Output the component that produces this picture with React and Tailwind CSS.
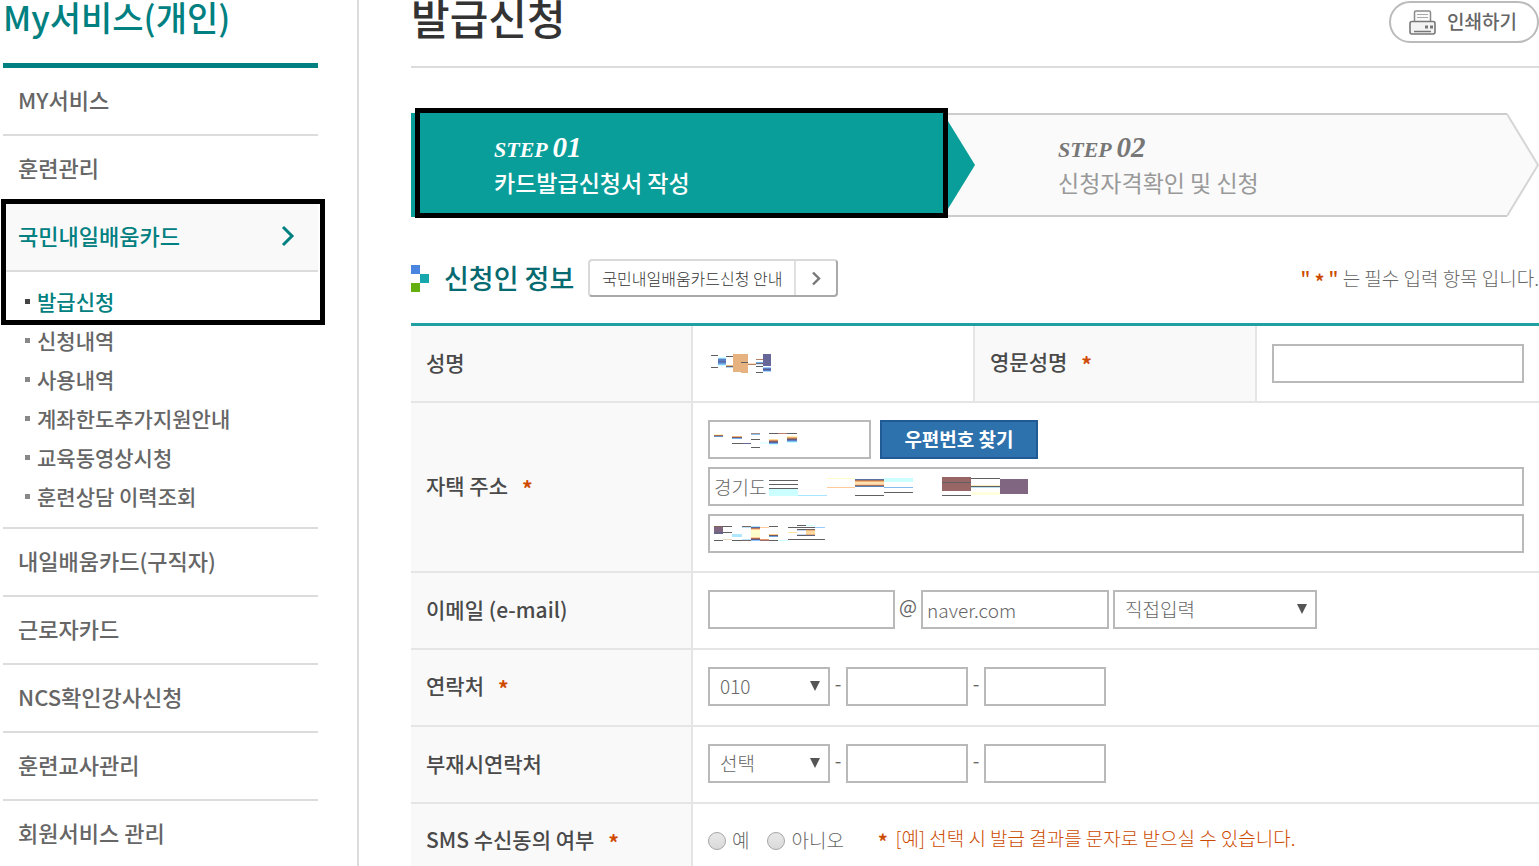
import { useState } from 'react'
import clsx from 'clsx'

const SUB_MENU = [
  '발급신청',
  '신청내역',
  '사용내역',
  '계좌한도추가지원안내',
  '교육동영상시청',
  '훈련상담 이력조회',
]

const MENU = [
  { label: 'MY서비스' },
  { label: '훈련관리' },
  { label: '국민내일배움카드', children: SUB_MENU },
  { label: '내일배움카드(구직자)' },
  { label: '근로자카드' },
  { label: 'NCS확인강사신청' },
  { label: '훈련교사관리' },
  { label: '회원서비스 관리' },
]

// Scrambled personal data: [x, y, width, height, colour]
const DARK = '#606063'

const NAME_MOSAIC = [
  [0, 1, 7, 1, DARK], [0, 13, 7, 1, DARK],
  [7, 3, 8, 1, '#ccffff'], [7, 4, 8, 1, '#8bc4f5'], [7, 5, 8, 2, '#5a80c4'], [7, 7, 8, 1, '#5a66a0'],
  [7, 8, 8, 1, '#5a80c4'], [7, 9, 8, 1, '#6699dd'], [7, 10, 8, 1, '#8bc4f5'], [7, 11, 8, 1, '#ccffff'],
  [15, 2, 7, 1, DARK], [15, 11, 7, 1, '#f0c080'], [15, 12, 7, 1, '#706060'], [15, 13, 7, 1, '#b0d8f8'],
  [22, 0, 15, 18, '#e6b380'], [30, 18, 7, 1, '#e6b380'], [30, 8, 7, 1, DARK],
  [37, 9, 8, 1, '#ffe0c0'], [37, 10, 8, 1, '#b88068'],
  [45, 5, 7, 1, '#b88068'], [45, 8, 7, 1, '#70b0e6'], [45, 9, 7, 1, '#706878'], [45, 10, 7, 1, '#d0e8f8'],
  [45, 12, 7, 1, DARK], [45, 18, 7, 1, DARK],
  [52, 0, 8, 12, '#666699'], [52, 13, 8, 1, '#99ccff'], [52, 14, 8, 1, '#5a80c4'],
  [52, 15, 8, 1, '#5a5a90'], [52, 16, 8, 1, '#5a80c4'], [52, 17, 8, 1, '#b0d8ff'],
]

const ZIP_MOSAIC = [
  [0, 1, 9, 1, '#fff0c0'], [0, 2, 9, 1, '#a87058'], [0, 3, 9, 1, '#6690cc'],
  [18, 3, 10, 1, '#f0b878'], [18, 4, 10, 1, '#805868'], [18, 5, 10, 1, '#70b0ee'],
  [18, 10, 10, 1, DARK], [28, 10, 9, 1, '#666699'],
  [37, 0, 9, 1, '#a08c88'], [37, 1, 9, 1, '#8bbdee'], [37, 6, 9, 1, DARK], [37, 14, 9, 1, DARK],
  [46, 9, 9, 2, '#e6ffff'],
  [55, 0, 9, 1, DARK], [55, 6, 9, 1, '#ffdd99'], [55, 7, 9, 1, '#d09060'], [55, 8, 9, 1, '#805868'],
  [55, 9, 9, 1, '#5a66a0'], [55, 10, 9, 1, '#70b0ee'], [55, 11, 9, 1, '#ccffff'],
  [64, 0, 9, 1, '#b88068'],
  [73, 0, 10, 1, DARK], [73, 3, 10, 1, '#ffeeb0'], [73, 4, 10, 1, '#f0b070'], [73, 5, 10, 1, '#b07858'],
  [73, 6, 10, 1, '#665c80'], [73, 7, 10, 1, '#5a80c4'], [73, 8, 10, 1, '#80c0f8'], [73, 9, 10, 1, '#ccffff'],
]

const ADDRESS_MOSAIC = [
  [0, 3, 29, 1, DARK], [0, 7, 29, 1, DARK], [0, 11, 29, 1, DARK], [0, 12, 29, 7, '#ccffff'],
  [29, 18, 29, 1, '#a8e6ff'],
  [58, 1, 28, 1, '#ffffcc'], [58, 10, 28, 1, '#ffcc99'],
  [86, 2, 29, 1, '#5a70a0'], [86, 3, 29, 1, '#b07858'], [86, 4, 29, 1, '#f0b070'], [86, 5, 29, 2, '#ffe0b0'],
  [86, 7, 29, 1, '#ffcc99'], [86, 8, 29, 1, '#a87058'], [86, 9, 29, 1, '#5a80b8'], [86, 18, 29, 1, DARK],
  [115, 1, 29, 4, '#ccffff'], [115, 10, 29, 1, '#80b8f0'], [115, 15, 29, 1, DARK],
  [173, 0, 29, 14, '#996666'], [173, 5, 29, 1, DARK], [173, 18, 29, 1, DARK],
  [202, 1, 29, 1, DARK], [202, 8, 29, 1, '#ffeebb'], [202, 9, 29, 1, DARK], [202, 10, 29, 1, '#b8e0f0'],
  [202, 15, 29, 3, '#ffffe0'],
  [231, 2, 28, 15, '#806680'],
]

const DETAIL_MOSAIC = [
  [0, 1, 9, 1, '#806055'], [0, 2, 9, 5, '#806680'], [0, 7, 9, 2, '#666688'], [0, 15, 9, 1, DARK],
  [9, 1, 9, 1, DARK], [9, 7, 9, 1, DARK], [9, 14, 9, 1, '#e8d8c0'],
  [18, 9, 10, 3, '#b0e6ff'], [18, 15, 10, 1, DARK],
  [28, 1, 9, 1, '#806860'], [28, 2, 9, 1, '#b8e6ff'], [28, 14, 9, 1, '#b8e6ff'], [28, 15, 9, 1, '#806860'],
  [37, 1, 9, 1, '#b0e6ff'], [37, 2, 9, 1, '#5a66a0'], [37, 3, 9, 1, '#c08058'], [37, 4, 9, 1, '#ffcc99'],
  [37, 5, 9, 7, '#ffffcc'], [37, 12, 9, 1, '#ffcc99'], [37, 13, 9, 1, '#b07050'], [37, 14, 9, 1, '#5a5a90'],
  [37, 15, 9, 1, '#90c8f8'],
  [46, 2, 9, 1, '#ffcc99'], [46, 14, 9, 1, '#e09868'], [46, 15, 9, 1, '#a07070'],
  [55, 1, 9, 1, DARK], [55, 9, 9, 1, '#ffcc88'], [55, 10, 9, 1, '#705868'], [55, 11, 9, 1, '#6aa0e0'],
  [55, 15, 9, 1, DARK],
  [64, 15, 10, 1, '#ccffff'],
  [74, 2, 9, 1, DARK], [74, 7, 9, 1, '#ffe6a0'], [74, 14, 37, 1, DARK],
  [83, 0, 9, 1, DARK], [83, 2, 9, 1, DARK], [83, 4, 9, 1, DARK], [83, 5, 9, 1, '#c8d8f0'],
  [83, 9, 9, 1, '#c8d8f0'], [83, 10, 9, 1, DARK],
  [92, 0, 9, 1, '#ccffff'], [92, 2, 9, 1, DARK], [92, 4, 9, 1, '#806860'], [92, 5, 9, 1, '#e6b380'],
  [92, 6, 9, 3, '#ffd8a0'], [92, 9, 9, 1, '#e6b380'], [92, 10, 9, 1, '#606080'],
  [101, 2, 10, 1, '#99ccff'],
]

const Mosaic = ({ cells, width, height, className }) => (
  <svg
    width={width}
    height={height}
    shapeRendering="crispEdges"
    aria-hidden="true"
    className={className}
  >
    {cells.map(([x, y, w, h, fill], i) => (
      <rect key={i} x={x} y={y} width={w} height={h} fill={fill} />
    ))}
  </svg>
)

const PrinterIcon = () => (
  <svg width="27" height="25" viewBox="0 0 27 25" fill="none" aria-hidden="true">
    <path d="M5.5 11V2.5Q5.5 1 7 1H20Q21.5 1 21.5 2.5V11" fill="#fafafa" stroke="#8a8a8a" strokeWidth="1.5" />
    <path d="M8 4.5H19M8 7.5H19" stroke="#aaa" />
    <rect x="1" y="11.5" width="25" height="12.5" rx="2" fill="#f3f3f3" stroke="#777" strokeWidth="1.6" />
    <path d="M5 21.5H22" stroke="#777" strokeWidth="1.5" />
    <path d="M16 15.5h3v3h-3zM21 15.5h3v3h-3z" fill="#777" />
  </svg>
)

const Chevron = ({ className, size = 'large' }) => (
  <svg
    width={size === 'large' ? 14 : 9}
    height={size === 'large' ? 22 : 15}
    viewBox={size === 'large' ? '0 0 14 22' : '0 0 9 15'}
    fill="none"
    stroke="currentColor"
    aria-hidden="true"
    className={className}
  >
    {size === 'large'
      ? <path d="M2 2L11 11L2 20" strokeWidth="3" />
      : <path d="M1 1.5L7 7.5L1 13.5" strokeWidth="2.4" />}
  </svg>
)

const Required = () => <span className="ml-[14px] align-[-3px] leading-none font-bold text-[#d04a05]">*</span>

const Field = ({ className, ...props }) => (
  <input
    type="text"
    className={clsx('h-[39px] border-2 border-[#b9b9b9] bg-white px-1 text-[19px] font-light text-[#666] outline-none', className)}
    {...props}
  />
)

const SelectBox = ({ className, options, ...props }) => (
  <span className={clsx('relative inline-flex', className)}>
    <select
      className="h-[39px] w-full appearance-none border-2 border-[#b9b9b9] bg-white px-[10px] text-[19px] font-light text-[#666] outline-none"
      {...props}
    >
      {options.map((option) => <option key={option}>{option}</option>)}
    </select>
    <svg width="10" height="10" viewBox="0 0 10 10" aria-hidden="true" className="pointer-events-none absolute top-[14px] right-[10px]">
      <path d="M0 0H10L5 10Z" fill="#555" />
    </svg>
  </span>
)

const Th = ({ children, htmlFor }) => (
  <th scope="row" className="border-r-2 border-b-2 border-[#e5e5e5] bg-[#f9f9f9] px-[15px] pb-[3px] text-left text-[21px] leading-6 font-medium text-[#4a4a4a]">
    <label htmlFor={htmlFor}>{children}</label>
  </th>
)

const Td = ({ children, className, ...props }) => (
  <td className={clsx('border-b-2 border-[#e5e5e5] px-[15px]', className)} {...props}>
    {children}
  </td>
)

// Cell that spans the rest of the row
const WideTd = ({ children }) => <Td colSpan={3} className="pb-[2px]">{children}</Td>

const Dash = () => <span className="w-4 pb-2 text-center text-[19px] leading-6">-</span>

const PhoneFields = ({ id, options }) => (
  <div className="flex items-center">
    <SelectBox id={id} options={options} className="w-[122px]" />
    <Dash />
    <Field className="w-[122px]" aria-label="가운데 번호" />
    <Dash />
    <Field className="w-[122px]" aria-label="끝 번호" />
  </div>
)

const Sidebar = () => (
  <aside className="w-[359px] shrink-0 border-r-2 border-[#dcdcdc] pl-[3px]">
    <h2 className="h-[63px] text-[34px] leading-[34px] font-medium text-[#008080]">My서비스(개인)</h2>
    <nav className="w-[315px] border-t-[5px] border-[#008080]">
      <ul>
        {MENU.map(({ label, children }) => (
          <li key={label} className="relative">
            <a
              href="#"
              className={clsx(
                'flex h-[68px] items-center justify-between border-b-2 border-[#dcdcdc] pr-[23px] pb-[3px] pl-[15px] text-[22px] font-medium',
                children ? 'bg-[#f9f9f9] text-[#008080]' : 'text-[#666]',
              )}
            >
              {label}
              {children && <Chevron />}
            </a>
            {children && (
              <>
                <ul className="border-b-2 border-[#dcdcdc] pt-[11px] pb-[10px]">
                  {children.map((child, i) => (
                    <li key={child}>
                      <a
                        href="#"
                        className={clsx(
                          'flex h-[39px] items-center gap-[7px] pb-[2px] pl-[22px] text-[21px] font-medium',
                          i === 0 ? 'text-[#008080]' : 'text-[#666]',
                        )}
                      >
                        <span className={clsx('size-[5px]', i === 0 ? 'bg-[#444]' : 'bg-[#888]')} />
                        {child}
                      </a>
                    </li>
                  ))}
                </ul>
                {/* Highlight frame around the current menu */}
                <span className="pointer-events-none absolute -top-[5px] -left-[2px] h-[126px] w-[324px] border-5 border-black" />
              </>
            )}
          </li>
        ))}
      </ul>
    </nav>
  </aside>
)

const Steps = () => (
  <ol className="mt-[45px] flex h-[104px]">
    <li className="relative flex w-1/2">
      <div className="flex-1 bg-[#099e99] pt-[17px] pl-[83px] text-white">
        <p className="font-['Liberation_Serif'] text-[22px] leading-[34px] font-bold italic">
          STEP <span className="text-[29px]">01</span>
        </p>
        <p className="text-[23px] leading-[30px] font-medium">카드발급신청서 작성</p>
      </div>
      <svg width="32" height="104" viewBox="0 0 32 104" aria-hidden="true">
        <path d="M0 0H32V104H0Z" fill="#fafafa" />
        <path d="M0 1H32M0 103H32" stroke="#ccc" strokeWidth="2" />
        <path d="M0 0L32 52L0 104Z" fill="#099e99" />
      </svg>
      <span className="pointer-events-none absolute -top-[5px] right-[27px] -bottom-px left-1 border-5 border-black" />
    </li>
    <li className="flex w-1/2">
      <div className="flex-1 border-y-2 border-[#ccc] bg-[#fafafa] pt-[15px] pl-[83px] text-[#777]">
        <p className="font-['Liberation_Serif'] text-[22px] leading-[34px] font-bold italic">
          STEP <span className="text-[29px]">02</span>
        </p>
        <p className="text-[23px] leading-[30px] text-[#999]">신청자격확인 및 신청</p>
      </div>
      <svg width="32" height="104" viewBox="0 0 32 104" aria-hidden="true">
        <path d="M0 1L31 52L0 103Z" fill="#fafafa" />
        <path d="M0 1L31 52L0 103" fill="none" stroke="#d6d6d6" strokeWidth="2" />
      </svg>
    </li>
  </ol>
)

const ApplicantTable = () => {
  const [domain, setDomain] = useState('naver.com')
  const [sms, setSms] = useState('')

  return (
    <table className="w-full table-fixed border-separate border-spacing-0 border-t-[3px] border-[#1fa0a3]">
      <colgroup>
        <col className="w-1/4" />
        <col className="w-1/4" />
        <col className="w-1/4" />
        <col className="w-1/4" />
      </colgroup>
      <tbody>
        <tr className="h-[77px]">
          <Th>성명</Th>
          <Td className="border-r-2">
            <Mosaic cells={NAME_MOSAIC} width={60} height={19} className="ml-[3px]" />
          </Td>
          <Th htmlFor="english-name">영문성명<Required /></Th>
          <Td><Field id="english-name" className="w-full" /></Td>
        </tr>
        <tr className="h-[170px]">
          <Th htmlFor="zip">자택 주소<Required /></Th>
          <WideTd>
            <div className="flex flex-col gap-2">
              <div className="flex gap-[9px]">
                <span className="relative flex w-[163px]">
                  <Field id="zip" className="w-full" />
                  <Mosaic cells={ZIP_MOSAIC} width={83} height={15} className="pointer-events-none absolute top-[13px] left-[6px]" />
                </span>
                <button type="button" className="h-[39px] w-[158px] border-2 border-[#1f5a94] bg-[#2d72ad] text-[19px] leading-8 font-bold text-white">
                  우편번호 찾기
                </button>
              </div>
              <span className="relative flex">
                <Field className="w-full" aria-label="기본 주소" defaultValue="경기도" />
                <Mosaic cells={ADDRESS_MOSAIC} width={259} height={19} className="pointer-events-none absolute top-[10px] left-[61px]" />
              </span>
              <span className="relative flex">
                <Field className="w-full" aria-label="상세 주소" />
                <Mosaic cells={DETAIL_MOSAIC} width={111} height={16} className="pointer-events-none absolute top-[11px] left-[6px]" />
              </span>
            </div>
          </WideTd>
        </tr>
        <tr className="h-[77px]">
          <Th htmlFor="email">이메일 (e-mail)</Th>
          <WideTd>
            <div className="flex items-center">
              <Field id="email" className="w-[187px]" />
              <span className="w-[26px] pb-2 text-center text-[19px] leading-6">@</span>
              <Field className="w-[188px]" aria-label="이메일 도메인" value={domain} onChange={(e) => setDomain(e.target.value)} />
              <SelectBox aria-label="도메인 선택" options={['직접입력']} className="ml-1 w-[204px]" />
            </div>
          </WideTd>
        </tr>
        <tr className="h-[77px]">
          <Th htmlFor="phone">연락처<Required /></Th>
          <WideTd><PhoneFields id="phone" options={['010', '011', '016', '017', '018', '019']} /></WideTd>
        </tr>
        <tr className="h-[77px]">
          <Th htmlFor="sub-phone">부재시연락처</Th>
          <WideTd><PhoneFields id="sub-phone" options={['선택', '02', '031', '032']} /></WideTd>
        </tr>
        <tr className="h-[77px]">
          <Th htmlFor="sms-yes">SMS 수신동의 여부<Required /></Th>
          <WideTd>
            <div className="flex items-center text-[19px] font-light">
              {[['yes', '예'], ['no', '아니오']].map(([value, text]) => (
                <label key={value} className="mr-[18px] flex items-center gap-[6px]">
                  <input
                    id={`sms-${value}`}
                    type="radio"
                    name="sms"
                    checked={sms === value}
                    onChange={() => setSms(value)}
                    className="size-[18px] appearance-none rounded-full border border-[#a5a5a5] bg-linear-to-b from-[#e8e8e8] to-[#dadada] checked:bg-[#666]"
                  />
                  {text}
                </label>
              ))}
              <p className="ml-4 pb-1 text-[#cc4b00]">
                <span className="mr-2 align-[-3px] leading-none font-bold">*</span>
                [예] 선택 시 발급 결과를 문자로 받으실 수 있습니다.
              </p>
            </div>
          </WideTd>
        </tr>
      </tbody>
    </table>
  )
}

const App = () => (
  <div className="flex h-screen overflow-hidden bg-white font-['Noto_Sans_CJK_KR',sans-serif] text-[#666]">
    <Sidebar />
    <main className="ml-[52px] min-w-0 flex-1">
      <header className="flex h-[68px] items-start justify-between border-b-2 border-[#dcdcdc]">
        <h1 className="text-[42px] leading-[34px] font-medium text-[#333]">발급신청</h1>
        <button type="button" className="mt-px flex h-[42px] w-[150px] items-center gap-[11px] rounded-full border-2 border-[#bbb] pl-[18px] text-[19px] font-medium">
          <PrinterIcon />
          <span className="pb-[2px]">인쇄하기</span>
        </button>
      </header>

      <Steps />

      <div className="mt-[42px] mb-[26px] flex h-[38px] items-center">
        <svg width="18" height="27" viewBox="0 0 18 27" aria-hidden="true">
          <path d="M0 0h9v9H0z" fill="#4a86e0" />
          <path d="M9 9h9v9H9z" fill="#16a8ad" />
          <path d="M0 18h9v9H0z" fill="#65b010" />
        </svg>
        <h3 className="ml-[15px] text-[27px] font-medium text-[#066a70]">신청인 정보</h3>
        <button type="button" className="ml-[14px] flex h-[38px] items-stretch rounded-[4px] border-2 border-t-[#d9d9d9] border-r-[#a9a9a9] border-b-[#a9a9a9] border-l-[#d9d9d9] text-[16px] text-[#333]">
          <span className="flex items-center border-r-2 border-[#e0e0e0] px-3 font-light">국민내일배움카드신청 안내</span>
          <span className="flex w-10 items-center justify-center text-[#777]"><Chevron size="small" /></span>
        </button>
        <p className="ml-auto text-[19px] font-light">
          <span className="font-medium text-[#cc4b00]">
            " <span className="align-[-3px] leading-none font-bold">*</span> "
          </span>{' '}
          는 필수 입력 항목 입니다.
        </p>
      </div>

      <ApplicantTable />
    </main>
  </div>
)

export default App
